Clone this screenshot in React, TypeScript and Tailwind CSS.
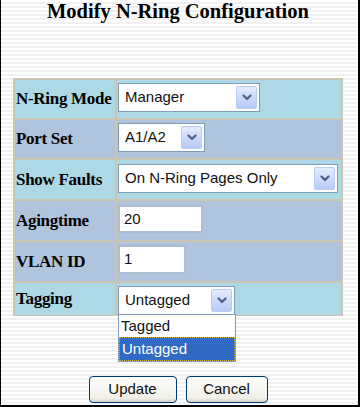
import React from "react";

const serif = { fontFamily: '"Liberation Serif", "Times New Roman", serif' };
const sans = { fontFamily: '"Liberation Sans", Arial, sans-serif' };

const Chevron = () => (
  <svg width="10" height="7" viewBox="0 0 10 7">
    <path d="M1.5 1.5 L5 5 L8.5 1.5" stroke="#4d6185" strokeWidth="2.2" fill="none" strokeLinecap="round" strokeLinejoin="round" />
  </svg>
);

const DropBtn = () => (
  <div className="w-[21px] self-stretch m-[2px] rounded-[2px] border border-[#b9ccf7] bg-[linear-gradient(#e4ecfe,#b6caf7)] flex items-center justify-center">
    <Chevron />
  </div>
);

function Select({ text, w, h = "h-[29px]" }: { text: string; w: string; h?: string }) {
  return (
    <div className={`${w} ${h} border border-[#7f9db9] bg-white flex items-stretch`}>
      <div className="flex-1 flex items-center pl-[6px] text-[15px] text-[#111]" style={sans}>
        {text}
      </div>
      <DropBtn />
    </div>
  );
}

function Input({ text, w, h = "h-[29px]" }: { text: string; w: string; h?: string }) {
  return (
    <div className={`${w} ${h} border-2 border-[#aebdcf] bg-white flex items-center pl-[4px] text-[15px] text-[#111]`} style={sans}>
      {text}
    </div>
  );
}

function Row({ label, bg, h, children, pt = "pt-[3px]" }: { label: string; bg: string; h: string; children: React.ReactNode; pt?: string }) {
  return (
    <div className={`grid grid-cols-[100px_1fr] gap-[2px] ${h}`}>
      <div className={`${bg} flex items-center pl-[1px] text-[17px] font-bold text-black whitespace-nowrap tracking-[-0.3px]`} style={serif}>
        {label}
      </div>
      <div className={`${bg} pl-[1px] ${pt}`}>{children}</div>
    </div>
  );
}

export default function App() {
  const blue = "bg-[#add8e6]";
  const steel = "bg-[#b0c4de]";
  return (
    <div className="w-[360px] h-[407px] overflow-hidden border-l border-r-2 border-b-2 border-black bg-[image:repeating-linear-gradient(to_bottom,#ffffff_0px,#ffffff_2px,#f1f1f1_2px,#f1f1f1_4px)] relative">
      <div className="ml-[12px] w-[330px] text-center text-[20.5px] leading-[23px] font-bold text-black" style={serif}>
        Modify N-Ring Configuration
      </div>
      <div className="ml-[12px] mt-[55px] w-[330px] bg-[#cbc6b3] p-[2px] flex flex-col gap-[2px] relative">
        <Row label="N-Ring Mode" bg={blue} h="h-[38px]">
          <Select text="Manager" w="w-[142px]" />
        </Row>
        <Row label="Port Set" bg={steel} h="h-[38px]">
          <Select text="A1/A2" w="w-[87px]" />
        </Row>
        <Row label="Show Faults" bg={blue} h="h-[39px]" pt="pt-[4px]">
          <Select text="On N-Ring Pages Only" w="w-[220px]" />
        </Row>
        <Row label="Agingtime" bg={steel} h="h-[39px]" pt="pt-[4px]">
          <Input text="20" w="w-[85px]" h="h-[28px]" />
        </Row>
        <Row label="VLAN ID" bg={steel} h="h-[39px]">
          <Input text="1" w="w-[68px]" />
        </Row>
        <Row label="Tagging" bg={blue} h="h-[31px]">
          <Select text="Untagged" w="w-[117px]" h="h-[29px]" />
        </Row>
        <div className="absolute left-[105px] top-[236px] w-[118px] h-[48px] bg-white border border-[#7f9db9] flex flex-col text-[15px]" style={sans}>
          <div className="h-[22px] flex items-center pl-[2px] text-[#111]">Tagged</div>
          <div className="h-[24px] flex items-center pl-[2px] bg-[#316ac5] text-white border border-dotted border-[#d8b040]">Untagged</div>
        </div>
      </div>
      <div className="ml-[12px] w-[330px] mt-[60px] flex justify-center gap-[9px]" style={sans}>
        <div className="w-[88px] h-[27px] rounded-[4px] border border-[#003c74] bg-[linear-gradient(#ffffff,#f0efe8_85%,#d6d0c5)] flex items-center justify-center text-[15px] text-[#111]">
          Update
        </div>
        <div className="w-[82px] h-[27px] rounded-[4px] border border-[#003c74] bg-[linear-gradient(#ffffff,#f0efe8_85%,#d6d0c5)] flex items-center justify-center text-[15px] text-[#111]">
          Cancel
        </div>
      </div>
    </div>
  );
}
